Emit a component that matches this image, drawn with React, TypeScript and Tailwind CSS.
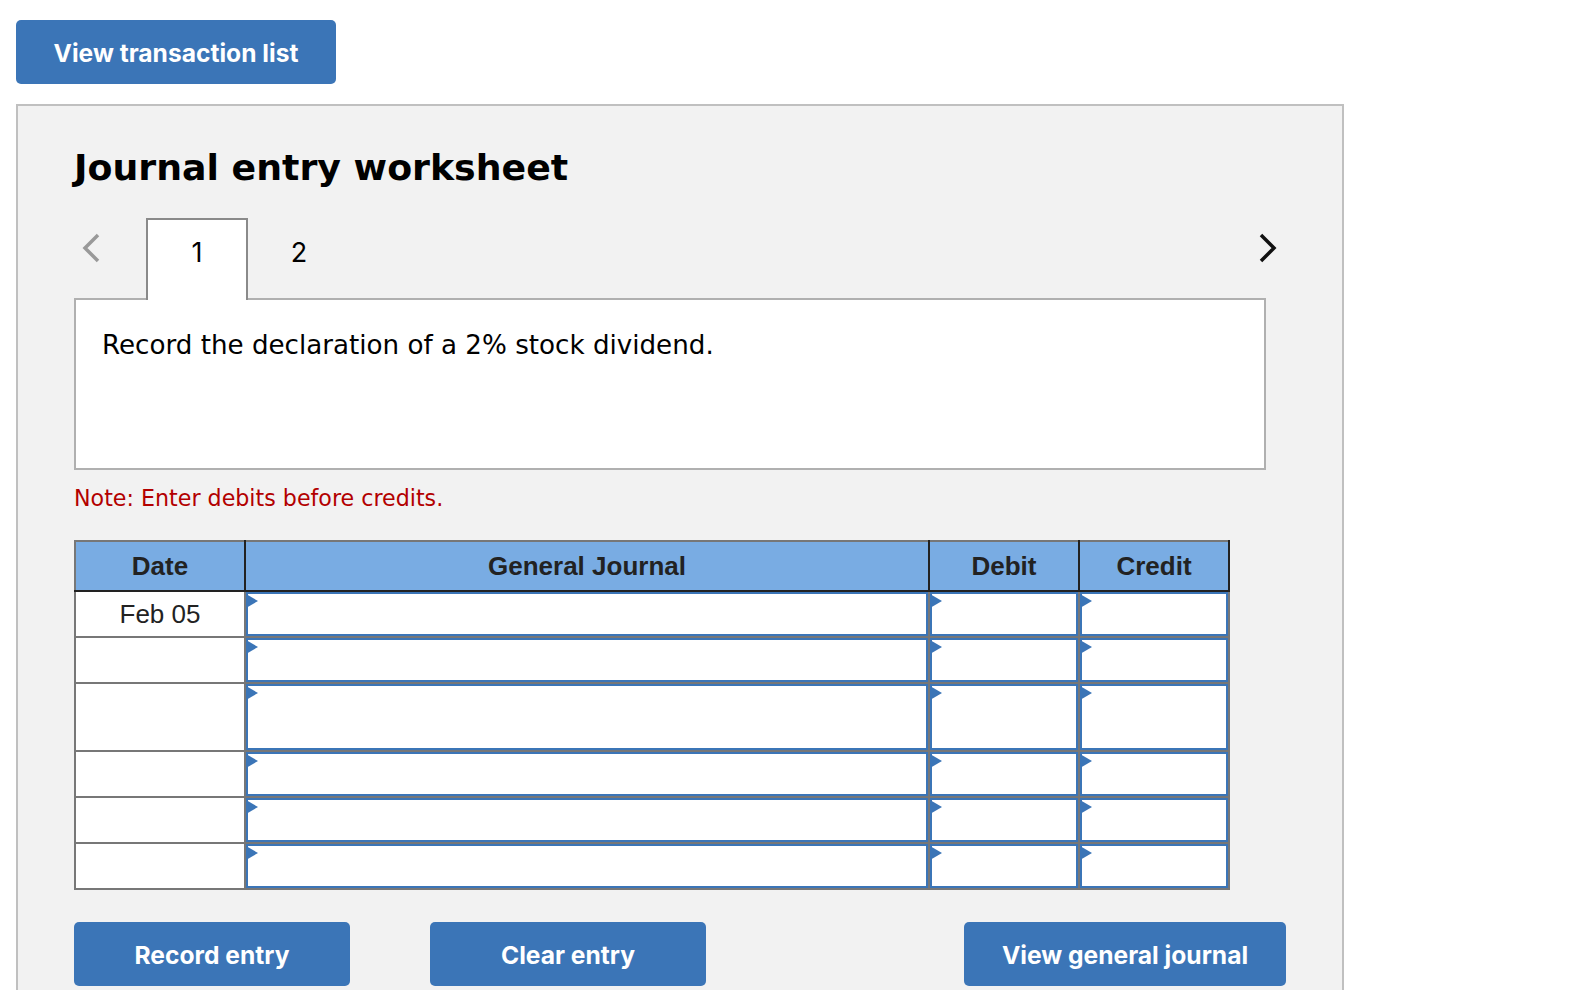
import React from "react";

const SANS = "font-['Inter',sans-serif]";
const VERDANA = "font-['DejaVu_Sans',sans-serif]";
const ARIAL = "font-['Liberation_Sans',Arial,sans-serif]";

const rowHeights = ["h-[46px]", "h-[46px]", "h-[68px]", "h-[46px]", "h-[46px]", "h-[46px]"];

function Button({ label, className }: { label: string; className: string }) {
  return (
    <button className={`h-[64px] rounded-[5px] bg-[#3b75b7] pt-[3px] text-white text-[24.6px] font-bold ${SANS} ${className}`}>
      {label}
    </button>
  );
}

// Editable cell with the small blue corner marker
function EntryCell() {
  return (
    <td className="p-0 h-[inherit] border-2 border-[#777777]">
      <div className="relative h-full bg-white border-2 border-[#3b75b7]">
        <svg className="absolute -left-[2px] top-0" width="13" height="15" viewBox="0 0 13 15">
          <polygon points="0,0 12,7 0,14" fill="#3b75b7" />
        </svg>
      </div>
    </td>
  );
}

export default function App() {
  return (
    <div className="h-[990px] overflow-hidden bg-white px-4 pt-5">
      <Button label="View transaction list" className="w-[320px] block" />

      {/* Worksheet panel */}
      <div className="mt-5 w-[1328px] h-[900px] border-2 border-[#c0c0c0] bg-[#f2f2f2] pl-[56px] pr-[56px] pt-[37px]">
        <h1 className={`text-[36.3px] leading-[50px] font-bold text-black ${VERDANA}`}>Journal entry worksheet</h1>

        {/* Tabs */}
        <div className="mt-[25px] flex h-[82px] items-start relative z-10">
          <svg className="ml-[6px] mt-[14px]" width="22" height="32" viewBox="0 0 22 32" fill="none" stroke="#999999" strokeWidth="3.5">
            <path d="M18 3 L5 16 L18 29" />
          </svg>
          <div className={`ml-[44px] flex h-[82px] w-[102px] justify-center border-2 border-b-0 border-[#8a8a8a] bg-white pt-[17px] text-[27px] leading-[32px] text-black ${SANS}`}>
            1
          </div>
          <div className={`flex h-[80px] w-[102px] justify-center pt-[19px] text-[27px] leading-[32px] text-black ${SANS}`}>
            2
          </div>
          <svg className="ml-auto mr-[7px] mt-[14px]" width="22" height="32" viewBox="0 0 22 32" fill="none" stroke="#111111" strokeWidth="3.5">
            <path d="M4 3 L17 16 L4 29" />
          </svg>
        </div>

        {/* Question */}
        <div className={`-mt-[2px] h-[172px] w-[1192px] border-2 border-[#b0b0b0] bg-white pl-[26px] pt-[27px] text-[26.17px] leading-[36px] text-black ${VERDANA}`}>
          Record the declaration of a 2% stock dividend.
        </div>

        <p className={`mt-[13px] text-[22.18px] leading-[30px] text-[#b30000] ${VERDANA}`}>Note: Enter debits before credits.</p>

        {/* Journal table */}
        <table className={`mt-[27px] w-[1154px] table-fixed border-collapse border-2 border-[#777777] ${ARIAL}`}>
          <colgroup>
            <col className="w-[170px]" />
            <col className="w-[684px]" />
            <col className="w-[150px]" />
            <col className="w-[150px]" />
          </colgroup>
          <thead>
            <tr className="h-[50px] bg-[#79ace3] text-[26px] font-bold text-[#222222]">
              <th className="border-2 border-[#222222] border-t-[#777777] border-l-[#777777]">Date</th>
              <th className="border-2 border-[#222222] border-t-[#777777]">General Journal</th>
              <th className="border-2 border-[#222222] border-t-[#777777]">Debit</th>
              <th className="border-2 border-[#222222] border-t-[#777777]">Credit</th>
            </tr>
          </thead>
          <tbody>
            {rowHeights.map((h, i) => (
              <tr key={i} className={h}>
                <td className="border-2 border-[#777777] bg-white p-0 text-center text-[26px] text-[#222222]">
                  {i === 0 ? "Feb 05" : ""}
                </td>
                <EntryCell />
                <EntryCell />
                <EntryCell />
              </tr>
            ))}
          </tbody>
        </table>

        {/* Actions */}
        <div className="mt-[32px] flex">
          <Button label="Record entry" className="w-[276px]" />
          <Button label="Clear entry" className="ml-[80px] w-[276px]" />
          <Button label="View general journal" className="ml-auto w-[322px]" />
        </div>
      </div>
    </div>
  );
}
